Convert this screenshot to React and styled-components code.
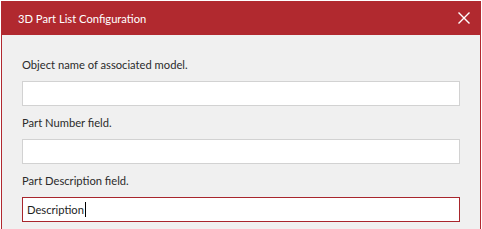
import React from "react";
import styled, { createGlobalStyle } from "styled-components";

const GlobalStyle = createGlobalStyle`
  html, body {
    margin: 0;
    padding: 0;
    background: #ffffff;
  }
  body {
    font-family: Lato, "Open Sans", "Liberation Sans", sans-serif;
  }
`;

const Dialog = styled.div`
  width: 480px;
  margin: 1px 0 0 1px;
  box-sizing: border-box;
  background: #f0f0f0;
  border-left: 1px solid #b1292f;
  border-right: 1px solid #b1292f;
  height: 228px;
  overflow: hidden;
`;

const Header = styled.div`
  height: 34px;
  margin: 0 -1px;
  background: #b1292f;
  display: flex;
  align-items: center;
  justify-content: space-between;
  padding: 0 10px 0 17px;
`;

const Title = styled.h1`
  margin: 0;
  font-size: 11.2px;
  font-weight: 400;
  color: #ffffff;
`;

const CloseButton = styled.button`
  width: 14px;
  height: 14px;
  padding: 0;
  border: none;
  background: none;
  display: flex;
  align-items: center;
  justify-content: center;
  cursor: pointer;
`;

const Body = styled.div`
  padding: 22px 20px 0 20px;
  display: flex;
  flex-direction: column;
  gap: 9px;
`;

const Field = styled.div`
  display: flex;
  flex-direction: column;
  gap: 8px;
`;

const Label = styled.label`
  font-size: 11.2px;
  line-height: 16px;
  color: #2b2b2b;
`;

const Input = styled.div`
  height: 25px;
  box-sizing: border-box;
  background: #ffffff;
  border: 1px solid ${(p) => (p.$focused ? "#a8262c" : "#d2d2d2")};
  display: flex;
  align-items: center;
  padding: 0 4px;
  font-size: 11.2px;
  color: #1e1e1e;
`;

const Caret = styled.span`
  display: inline-block;
  width: 1px;
  height: 15px;
  background: #000000;
  margin-left: 1px;
`;

const fields = [
  { label: "Object name of associated model.", value: "" },
  { label: "Part Number field.", value: "" },
  { label: "Part Description field.", value: "Description", focused: true },
];

export default function App() {
  return (
    <>
      <GlobalStyle />
      <Dialog>
        <Header>
          <Title>3D Part List Configuration</Title>
          <CloseButton aria-label="Close">
            <svg width="12" height="12" viewBox="0 0 12 12">
              <path
                d="M1 1 L11 11 M11 1 L1 11"
                stroke="#ffffff"
                strokeWidth="1.4"
                strokeLinecap="square"
              />
            </svg>
          </CloseButton>
        </Header>
        <Body>
          {fields.map((f) => (
            <Field key={f.label}>
              <Label>{f.label}</Label>
              <Input $focused={f.focused}>
                {f.value}
                {f.focused && <Caret />}
              </Input>
            </Field>
          ))}
        </Body>
      </Dialog>
    </>
  );
}
